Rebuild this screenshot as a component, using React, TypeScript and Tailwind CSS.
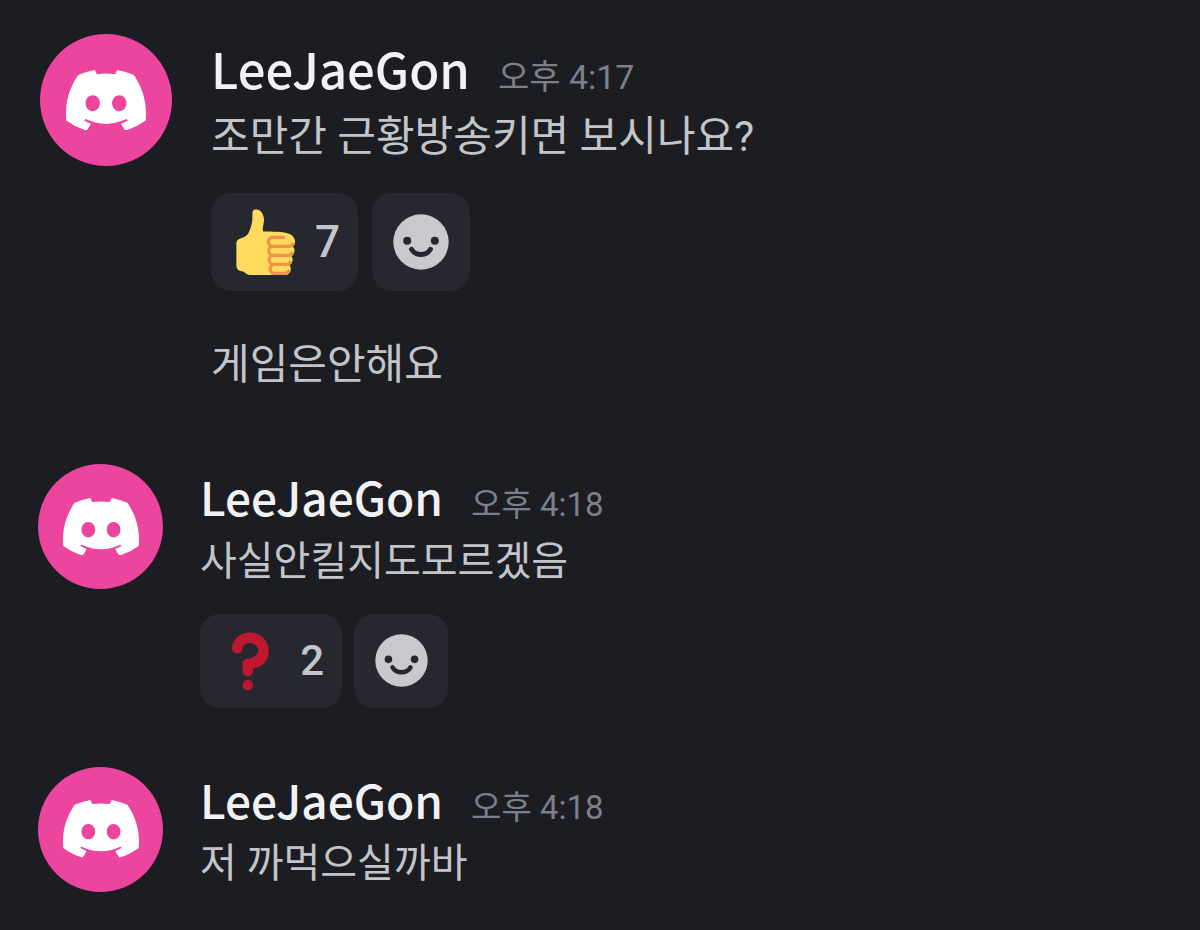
type Size = "lg" | "md";
type ReactionKind = "thumb" | "question";

interface Message {
  size: Size;
  time: string;
  dateTime: string;
  text: string;
  reaction?: { kind: ReactionKind; label: string; count: number };
  followUp?: string;
}

const messages: Message[] = [
  {
    size: "lg",
    time: "오후 4:17",
    dateTime: "16:17",
    text: "조만간 근황방송키면 보시나요?",
    reaction: { kind: "thumb", label: "thumbs up", count: 7 },
    followUp: "게임은안해요",
  },
  {
    size: "md",
    time: "오후 4:18",
    dateTime: "16:18",
    text: "사실안킬지도모르겠음",
    reaction: { kind: "question", label: "question", count: 2 },
  },
  { size: "md", time: "오후 4:18", dateTime: "16:18", text: "저 까먹으실까바" },
];

const styles = {
  lg: {
    row: "gap-[39px] pb-2.5 pl-10",
    avatar: "size-[132px]",
    logo: "w-20",
    body: "pt-1",
    name: "text-[49px] leading-[60px]",
    time: "text-[34px]",
    text: "text-[42px] leading-[60px]",
    firstText: "mt-1",
    chips: "mt-[26px] gap-3.5",
    chip: "h-[98px] w-[147px] rounded-[20px] pl-5 pr-[18px]",
    add: "size-[98px] rounded-[20px]",
    emoji: "size-[66px]",
    smile: "size-14",
    count: "text-[44px]",
  },
  md: {
    row: "gap-[37px] pl-[38px]",
    avatar: "size-[125px]",
    logo: "w-[76px]",
    body: "pt-0.5",
    name: "text-[46px] leading-[60px]",
    time: "text-[33px]",
    text: "text-[40px] leading-[60px]",
    firstText: "mt-0.5",
    chips: "mt-[22px] gap-3",
    chip: "h-[94px] w-[142px] rounded-[20px] pl-[18px] pr-[18px]",
    add: "size-[94px] rounded-[20px]",
    emoji: "size-[63px]",
    smile: "size-[53px]",
    count: "text-[42px]",
  },
};

function DiscordLogo({ className }: { className: string }) {
  return (
    <svg viewBox="0 0 127.14 96.36" className={className} fill="#fff" aria-hidden="true">
      <path d="M107.7,8.07A105.15,105.15,0,0,0,81.47,0a72.06,72.06,0,0,0-3.36,6.83A97.68,97.68,0,0,0,49,6.83,72.37,72.37,0,0,0,45.64,0,105.89,105.89,0,0,0,19.39,8.09C2.79,32.65-1.71,56.6.54,80.21h0A105.73,105.73,0,0,0,32.71,96.36,77.7,77.7,0,0,0,39.6,85.25a68.42,68.42,0,0,1-10.85-5.18c.91-.66,1.8-1.34,2.66-2a75.57,75.57,0,0,0,64.32,0c.87.71,1.76,1.39,2.66,2a68.68,68.68,0,0,1-10.87,5.19,77,77,0,0,0,6.89,11.1A105.25,105.25,0,0,0,126.6,80.22h0C129.24,52.84,122.09,29.11,107.7,8.07ZM42.45,65.69C36.18,65.69,31,60,31,53s5-12.74,11.43-12.74S54,46,53.89,53,48.84,65.69,42.45,65.69Zm42.24,0C78.41,65.69,73.25,60,73.25,53s5-12.74,11.44-12.74S96.23,46,96.12,53,91.08,65.69,84.69,65.69Z" />
    </svg>
  );
}

function ThumbIcon({ className }: { className: string }) {
  return (
    <svg viewBox="0 0 36 36" className={className} aria-hidden="true">
      <path
        fill="#FFDB5E"
        d="M34.956 17.916c0-.503-.12-.975-.321-1.404-1.341-4.326-7.619-4.01-16.549-4.221-1.493-.035-.639-1.798-.115-5.668.341-2.517-1.282-6.382-4.01-6.382-4.498 0-.171 3.548-4.148 12.322-2.125 4.688-6.875 2.062-6.875 6.771v10.719c0 1.833.18 3.595 2.758 3.885C8.195 34.219 7.633 36 11.238 36h18.044c1.838 0 3.333-1.496 3.333-3.334 0-.762-.267-1.456-.698-2.018 1.02-.571 1.72-1.649 1.72-2.899 0-.76-.266-1.454-.696-2.015 1.023-.57 1.725-1.649 1.725-2.901 0-.909-.368-1.733-.961-2.336.757-.611 1.251-1.535 1.251-2.581z"
      />
      <path
        fill="#EE9547"
        d="M23.02 21.249h8.604c1.17 0 2.268-.626 2.866-1.633.246-.415.109-.952-.307-1.199-.415-.247-.952-.108-1.199.307-.283.479-.806.775-1.361.775h-8.81c-.873 0-1.583-.71-1.583-1.583s.71-1.583 1.583-1.583H28.7c.483 0 .875-.392.875-.875s-.392-.875-.875-.875h-5.888c-1.838 0-3.333 1.495-3.333 3.333 0 1.025.475 1.932 1.205 2.544-.615.605-.998 1.445-.998 2.373 0 1.028.478 1.938 1.212 2.549-.611.604-.99 1.441-.99 2.367 0 1.12.559 2.108 1.409 2.713-.524.589-.852 1.356-.852 2.204 0 1.838 1.495 3.333 3.333 3.333h5.484c1.17 0 2.269-.625 2.867-1.632.247-.415.11-.952-.305-1.199-.416-.245-.953-.11-1.199.305-.285.479-.808.776-1.363.776h-5.484c-.873 0-1.583-.71-1.583-1.583s.71-1.583 1.583-1.583h6.506c1.17 0 2.27-.626 2.867-1.633.247-.416.11-.953-.305-1.199-.419-.251-.954-.11-1.199.305-.289.487-.799.777-1.363.777h-7.063c-.873 0-1.583-.711-1.583-1.584s.71-1.583 1.583-1.583h8.091c1.17 0 2.269-.625 2.867-1.632.247-.415.11-.952-.305-1.199-.417-.246-.953-.11-1.199.305-.289.486-.799.776-1.363.776H23.02c-.873 0-1.583-.71-1.583-1.583s.71-1.584 1.583-1.584z"
      />
    </svg>
  );
}

function QuestionIcon({ className }: { className: string }) {
  return (
    <svg viewBox="0 0 36 36" className={className} fill="#BE1931" aria-hidden="true">
      <path d="M17 27c-1.657 0-3-1.343-3-3v-4c0-1.657 1.343-3 3-3 .603-.006 6-1 6-5 0-2-2-4-5-4-2.441 0-4 2-4 3 0 1.657-1.343 3-3 3s-3-1.343-3-3c0-4.878 4.58-9 10-9 8 0 11 5.982 11 11 0 4.145-2.277 7.313-6.413 8.92-.9.351-1.79.587-2.587.747V24c0 1.657-1.343 3-3 3z" />
      <circle cx="17" cy="32" r="3" />
    </svg>
  );
}

function SmileIcon({ className }: { className: string }) {
  return (
    <svg viewBox="0 0 56 56" className={className} aria-hidden="true">
      <circle cx="28" cy="28" r="27.7" fill="#c8c9ce" />
      <circle cx="14.2" cy="26.8" r="4" fill="#26272f" />
      <circle cx="41.8" cy="26.8" r="4" fill="#26272f" />
      <path d="M18.5 35.3c2 3.500 5.500 5.200 9.500 5.200s7.500-1.700 9.500-5.200" fill="none" stroke="#26272f" strokeWidth="4.800" strokeLinecap="round" />
    </svg>
  );
}

function MessageItem({ message }: { message: Message }) {
  const s = styles[message.size];
  const { reaction } = message;
  return (
    <li className={`flex items-start ${s.row}`}>
      <div className={`flex shrink-0 items-center justify-center rounded-full bg-[#eb459e] ${s.avatar}`}>
        <DiscordLogo className={s.logo} />
      </div>
      <article className={`min-w-0 ${s.body}`}>
        <header className="flex items-baseline gap-7 whitespace-nowrap">
          <h2 className={`font-['Noto_Sans_CJK_KR',sans-serif] font-medium text-[#f2f2f4] ${s.name}`}>LeeJaeGon</h2>
          <time dateTime={message.dateTime} className={`text-[#7d7f8a] ${s.time}`}>
            {message.time}
          </time>
        </header>
        <p className={`${s.firstText} ${s.text}`}>{message.text}</p>
        {reaction && (
          <div className={`flex ${s.chips}`}>
            <button type="button" aria-label={`${reaction.label} ${reaction.count}`} className={`flex items-center justify-between bg-[#26272f] ${s.chip}`}>
              {reaction.kind === "thumb" ? <ThumbIcon className={s.emoji} /> : <QuestionIcon className={s.emoji} />}
              <span className={`font-medium ${s.count}`}>{reaction.count}</span>
            </button>
            <button type="button" aria-label="Add reaction" className={`flex items-center justify-center bg-[#26272f] ${s.add}`}>
              <SmileIcon className={s.smile} />
            </button>
          </div>
        )}
        {message.followUp && <p className={`mt-11 ${s.text}`}>{message.followUp}</p>}
      </article>
    </li>
  );
}

export default function App() {
  return (
    <main className="min-h-screen bg-[#1c1d22] font-['Roboto','Noto_Sans_CJK_KR',sans-serif] text-[#c4c5ca]">
      <ul className="flex flex-col gap-[59px] pt-[34px]">
        {messages.map((message, i) => (
          <MessageItem key={i} message={message} />
        ))}
      </ul>
    </main>
  );
}
